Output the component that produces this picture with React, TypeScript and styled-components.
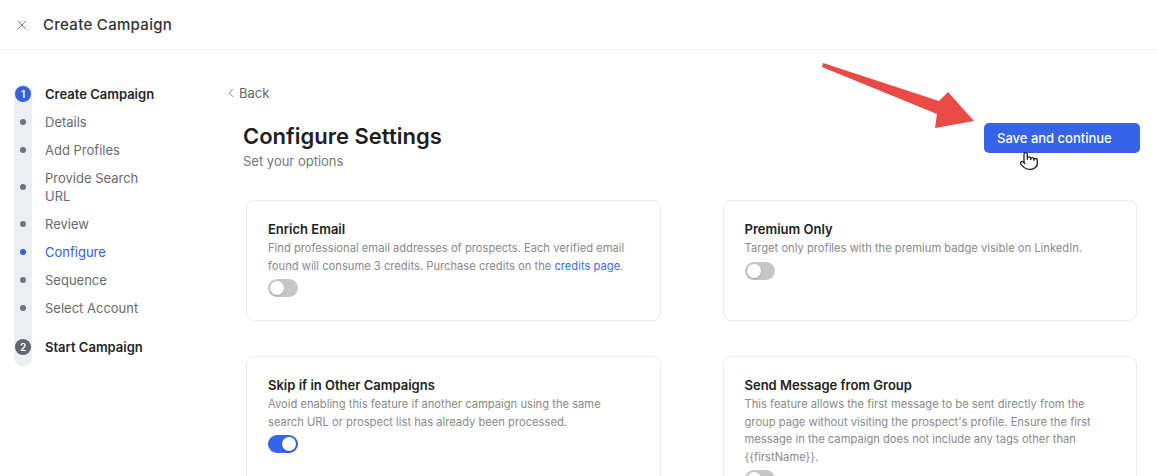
import styled, { createGlobalStyle } from "styled-components";
import { X, ChevronLeft, Pointer } from "lucide-react";

const GlobalStyle = createGlobalStyle`
  html, body {
    margin: 0;
    padding: 0;
    background: #ffffff;
  }
  body {
    font-family: "Inter", "Open Sans", sans-serif;
    color: #222;
    -webkit-font-smoothing: antialiased;
  }
  * {
    box-sizing: border-box;
  }
`;

const Page = styled.div`
  position: relative;
  width: 1158px;
  height: 476px;
  overflow: hidden;
`;

const TopBar = styled.header`
  height: 50px;
  display: flex;
  align-items: center;
  gap: 13px;
  padding-left: 14px;
  border-bottom: 1px solid #ececec;

  h1 {
    margin: 0;
    font-size: 15px;
    font-weight: 500;
    color: #333;
    letter-spacing: 0.3px;
  }
`;

const Body = styled.div`
  display: flex;
`;

const Sidebar = styled.aside`
  width: 227px;
  flex-shrink: 0;
  padding: 30px 0 0 14px;
`;

const Stepper = styled.ol`
  position: relative;
  list-style: none;
  margin: 0;
  padding: 0 0 5px;

  &::before {
    content: "";
    position: absolute;
    left: 0;
    top: 4px;
    bottom: 0;
    width: 18px;
    border-radius: 9px;
    background: #eceef1;
  }
`;

const StepRow = styled.li<{ $spaced?: boolean }>`
  position: relative;
  display: grid;
  grid-template-columns: 18px 1fr;
  column-gap: 13px;
  align-items: center;
  padding: 5px 0;
  margin-top: ${(p) => (p.$spaced ? "11px" : "0")};
`;

const Marker = styled.span`
  display: flex;
  justify-content: center;
  align-items: center;
`;

const NumberBadge = styled.span<{ $active?: boolean }>`
  width: 16px;
  height: 16px;
  border-radius: 50%;
  background: ${(p) => (p.$active ? "#3461e0" : "#5f6470")};
  color: #fff;
  font-size: 10px;
  font-weight: 600;
  display: flex;
  align-items: center;
  justify-content: center;
`;

const Dot = styled.span<{ $active?: boolean }>`
  width: 6px;
  height: 6px;
  border-radius: 50%;
  background: ${(p) => (p.$active ? "#3461e0" : "#6b7280")};
`;

const StepLabel = styled.span<{ $group?: boolean; $active?: boolean }>`
  font-size: 13px;
  line-height: 18px;
  font-weight: ${(p) => (p.$group ? 600 : 400)};
  color: ${(p) => (p.$active ? "#3461e0" : p.$group ? "#262626" : "#6b6b6b")};
  max-width: 110px;
`;

const Main = styled.main`
  flex: 1;
  padding: 34px 18px 0 0;
`;

const BackLink = styled.a`
  display: inline-flex;
  align-items: center;
  gap: 1px;
  margin-left: -3px;
  font-size: 13px;
  line-height: 18px;
  color: #666;
  cursor: pointer;
`;

const HeadRow = styled.div`
  display: flex;
  justify-content: space-between;
  align-items: flex-start;
  margin-top: 17px;
  padding-left: 16px;
`;

const Titles = styled.div`
  h2 {
    margin: 0;
    font-size: 22px;
    line-height: 30px;
    font-weight: 600;
    color: #1f1f1f;
  }
  p {
    margin: 1px 0 0;
    font-size: 13px;
    line-height: 18px;
    color: #777;
  }
`;

const PrimaryButton = styled.button`
  margin-top: 2px;
  width: 156px;
  height: 30px;
  padding: 0 13px;
  text-align: left;
  border: none;
  border-radius: 5px;
  background: #3563e9;
  color: #fff;
  font-family: inherit;
  font-size: 13px;
  font-weight: 500;
  cursor: pointer;
`;

const CardGrid = styled.div`
  display: grid;
  grid-template-columns: 1fr 1fr;
  column-gap: 62px;
  row-gap: 35px;
  margin: 30px 3px 0 19px;
`;

const Card = styled.section`
  border: 1px solid #ebebeb;
  border-radius: 8px;
  padding: 19px 21px 23px;

  h3 {
    margin: 0;
    font-size: 13px;
    line-height: 18px;
    font-weight: 600;
    color: #222;
  }
  p {
    margin: 2px 0 0;
    font-size: 11.2px;
    line-height: 17.5px;
    color: #8a8a8a;
  }
  a {
    color: #3a6fdc;
    text-decoration: none;
  }
`;

const Toggle = styled.span<{ $on?: boolean }>`
  display: block;
  margin-top: 4px;
  width: 30px;
  height: 18px;
  border-radius: 9px;
  padding: 2px;
  background: ${(p) => (p.$on ? "#3563e9" : "#c6c6c6")};

  &::after {
    content: "";
    display: block;
    width: 14px;
    height: 14px;
    border-radius: 50%;
    background: #fff;
    box-shadow: 0 1px 2px rgba(0, 0, 0, 0.2);
    margin-left: ${(p) => (p.$on ? "12px" : "0")};
  }
`;

const Annotation = styled.svg`
  position: absolute;
  left: 0;
  top: 0;
  pointer-events: none;
`;

const Cursor = styled.span`
  position: absolute;
  left: 1019px;
  top: 151px;
  display: flex;
  color: #222;
`;

type Step = { label: string; group?: boolean; num?: number; active?: boolean; spaced?: boolean };

const steps: Step[] = [
  { label: "Create Campaign", group: true, num: 1, active: true },
  { label: "Details" },
  { label: "Add Profiles" },
  { label: "Provide Search URL" },
  { label: "Review" },
  { label: "Configure", active: true },
  { label: "Sequence" },
  { label: "Select Account" },
  { label: "Start Campaign", group: true, num: 2, spaced: true },
];

export default function App() {
  return (
    <>
      <GlobalStyle />
      <Page>
        <TopBar>
          <X size={16} color="#777" strokeWidth={1.4} />
          <h1>Create Campaign</h1>
        </TopBar>
        <Body>
          <Sidebar>
            <Stepper>
              {steps.map((s) => (
                <StepRow key={s.label} $spaced={s.spaced}>
                  <Marker>
                    {s.group ? (
                      <NumberBadge $active={s.active}>{s.num}</NumberBadge>
                    ) : (
                      <Dot $active={s.active} />
                    )}
                  </Marker>
                  <StepLabel $group={s.group} $active={!s.group && s.active}>
                    {s.label}
                  </StepLabel>
                </StepRow>
              ))}
            </Stepper>
          </Sidebar>
          <Main>
            <BackLink>
              <ChevronLeft size={14} strokeWidth={1.5} />
              Back
            </BackLink>
            <HeadRow>
              <Titles>
                <h2>Configure Settings</h2>
                <p>Set your options</p>
              </Titles>
              <PrimaryButton>Save and continue</PrimaryButton>
            </HeadRow>
            <CardGrid>
              <Card>
                <h3>Enrich Email</h3>
                <p>
                  Find professional email addresses of prospects. Each verified email found will consume 3
                  credits. Purchase credits on the <a>credits page</a>.
                </p>
                <Toggle />
              </Card>
              <Card>
                <h3>Premium Only</h3>
                <p>Target only profiles with the premium badge visible on LinkedIn.</p>
                <Toggle />
              </Card>
              <Card>
                <h3>Skip if in Other Campaigns</h3>
                <p>
                  Avoid enabling this feature if another campaign using the same search URL or prospect list
                  has already been processed.
                </p>
                <Toggle $on />
              </Card>
              <Card>
                <h3>Send Message from Group</h3>
                <p>
                  This feature allows the first message to be sent directly from the group page without
                  visiting the prospect's profile. Ensure the first message in the campaign does not include
                  any tags other than {"{{firstName}}"}.
                </p>
                <Toggle />
              </Card>
            </CardGrid>
          </Main>
        </Body>
        <Annotation width="1158" height="476" viewBox="0 0 1158 476">
          <polygon
            points="823,63 939,101 948,92 974,121 935,128 937,114 822,67"
            fill="#ea4a45"
          />
        </Annotation>
        <Cursor>
          <Pointer size={20} fill="#fff" strokeWidth={1.6} />
        </Cursor>
      </Page>
    </>
  );
}
